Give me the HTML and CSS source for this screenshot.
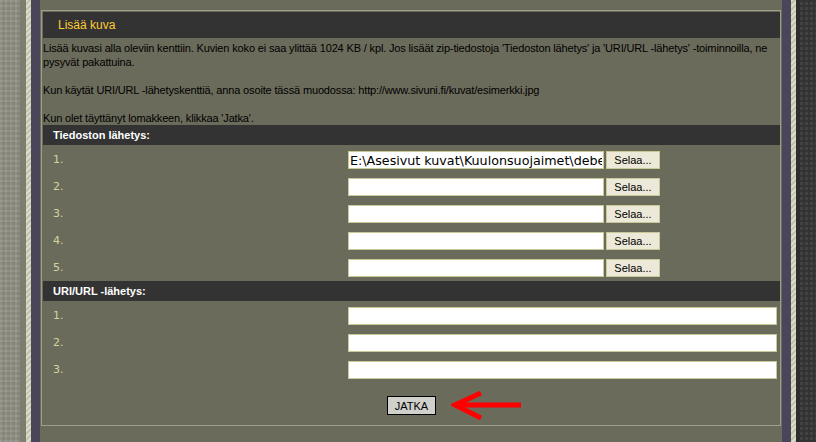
FILE: index.html
```html
<!DOCTYPE html>
<html lang="fi">
<head>
    <meta charset="UTF-8">
    <meta name="viewport" content="width=device-width, initial-scale=1.0">
    <title>Lisää kuva</title>
    <link rel="stylesheet" href="styles.css">
</head>
<body>
    <div class="page">
        <div class="edge edge-left"></div>
        <div class="stripe"></div>
        <div class="rail"></div>

        <main class="content">
            <div class="box">
                <div class="box-title">Lisää kuva</div>

                <p class="intro">
                    Lisää kuvasi alla oleviin kenttiin. Kuvien koko ei saa ylittää 1024 KB / kpl. Jos lisäät zip-tiedostoja 'Tiedoston lähetys' ja 'URI/URL -lähetys' -toiminnoilla, ne pysyvät pakattuina.<br><br>
                    Kun käytät URI/URL -lähetyskenttiä, anna osoite tässä muodossa: http://www.sivuni.fi/kuvat/esimerkki.jpg<br><br>
                    Kun olet täyttänyt lomakkeen, klikkaa 'Jatka'.
                </p>

                <!-- Tiedostot koneelta -->
                <div class="section-head">Tiedoston lähetys:</div>
                <div class="rows">
                    <div class="row">
                        <span class="num">1.</span>
                        <span class="field">
                            <input class="file-path" type="text" value="E:\Asesivut kuvat\Kuulonsuojaimet\debe_kuulonsuojain.jpg">
                            <button class="browse">Selaa...</button>
                        </span>
                    </div>
                    <div class="row">
                        <span class="num">2.</span>
                        <span class="field"><input class="file-path" type="text"><button class="browse">Selaa...</button></span>
                    </div>
                    <div class="row">
                        <span class="num">3.</span>
                        <span class="field"><input class="file-path" type="text"><button class="browse">Selaa...</button></span>
                    </div>
                    <div class="row">
                        <span class="num">4.</span>
                        <span class="field"><input class="file-path" type="text"><button class="browse">Selaa...</button></span>
                    </div>
                    <div class="row">
                        <span class="num">5.</span>
                        <span class="field"><input class="file-path" type="text"><button class="browse">Selaa...</button></span>
                    </div>
                </div>

                <!-- Osoitteet -->
                <div class="section-head">URI/URL -lähetys:</div>
                <div class="rows">
                    <div class="row">
                        <span class="num">1.</span>
                        <span class="field"><input class="url" type="text"></span>
                    </div>
                    <div class="row">
                        <span class="num">2.</span>
                        <span class="field"><input class="url" type="text"></span>
                    </div>
                    <div class="row">
                        <span class="num">3.</span>
                        <span class="field"><input class="url" type="text"></span>
                    </div>
                </div>

                <div class="submit-row">
                    <span class="submit-wrap">
                        <button class="submit">JATKA</button>
                        <svg class="arrow" width="72" height="32" viewBox="0 0 72 32">
                            <path d="M30 3 L4 15 L30 28" fill="none" stroke="#ff0000" stroke-width="5"/>
                            <path d="M6 15 H70" stroke="#ff0000" stroke-width="5"/>
                        </svg>
                    </span>
                </div>
            </div>
        </main>

        <div class="rail"></div>
        <div class="stripe"></div>
        <div class="edge edge-right"></div>
    </div>
</body>
</html>
```

FILE: styles.css
```css
/* Sivun runko */
body {
    margin: 0;
    font-family: 'Liberation Sans', Arial, sans-serif;
    font-size: 11px;
    background-color: #6b6b5b;
}
.page {
    display: flex;
    height: 100vh;
    overflow: hidden;
}

/* Reunakuviot */
.edge-left {
    width: 20px;
    background-color: #85857a;
    background-image:
        linear-gradient(90deg, rgba(255,255,255,0.09) 50%, transparent 50%),
        linear-gradient(rgba(255,255,255,0.09) 50%, transparent 50%);
    background-size: 5px 5px;
    border-right: 6px solid #7d7d70;
}
.edge-right {
    width: 16px;
    background-color: #333;
    background-image:
        linear-gradient(#333 40%, transparent 40%),
        linear-gradient(90deg, #424242 60%, #333 60%);
    background-size: 5px 5px;
    border-left: 4px solid #2e2e2e;
}
.stripe {
    width: 5px;
    background: repeating-linear-gradient(135deg, #dcdcc8 0 2px, #c4c4ae 2px 4px);
}
.rail {
    width: 9px;
    background-color: #4b4559;
}

/* Sisältö */
.content {
    width: 742px;
    background-color: #6b6b5b;
}
.box {
    box-sizing: border-box;
    height: 416px;
    margin: 10px 1px 0 1px;
    padding: 1px 0 0 1px;
    border: 1px solid #9e9e8a;
}
.box-title {
    height: 26px;
    line-height: 26px;
    padding-left: 15px;
    background-color: #333;
    color: #ffcc33;
    font-size: 12px;
}
.intro {
    margin: 3px 0 0 0;
    line-height: 14px;
    letter-spacing: -0.15px;
    color: #000;
}
.section-head {
    height: 20px;
    line-height: 20px;
    padding-left: 10px;
    background-color: #333;
    color: #fff;
    font-weight: bold;
}
.rows {
    padding-top: 1px;
}
.row {
    display: flex;
    box-sizing: border-box;
    height: 27px;
    padding-top: 5px;
}
.num {
    width: 295px;
    padding-left: 10px;
    line-height: 18px;
    color: #d4d4a0;
    font-family: 'DejaVu Sans', Verdana, sans-serif;
    font-size: 11px;
}
.field {
    display: flex;
    gap: 2px;
}

/* Kentät ja napit */
input {
    box-sizing: border-box;
    height: 18px;
    margin: 0;
    padding: 0 1px;
    border: 1px solid #c8c898;
    background-color: #fff;
    font-family: 'DejaVu Sans', Verdana, sans-serif;
    font-size: 12.7px;
    color: #000;
    outline: none;
}
.file-path {
    width: 256px;
}
.url {
    width: 429px;
}
.browse {
    box-sizing: border-box;
    width: 54px;
    height: 18px;
    margin: 0;
    padding: 0;
    border: 1px solid #c8c898;
    background-color: #ece9d8;
    font-family: 'Liberation Sans', Arial, sans-serif;
    font-size: 11px;
    color: #000;
}
.submit-row {
    display: flex;
    justify-content: center;
    margin-top: 13px;
}
.submit-wrap {
    position: relative;
    display: block;
}
.submit {
    display: block;
    box-sizing: border-box;
    width: 49px;
    height: 19px;
    margin: 0;
    padding: 0;
    border: 1px solid #000;
    background-color: #d0d0cc;
    font-family: 'Liberation Sans', Arial, sans-serif;
    font-size: 11px;
    color: #000;
}
.arrow {
    position: absolute;
    left: 64px;
    top: -6px;
}
```
